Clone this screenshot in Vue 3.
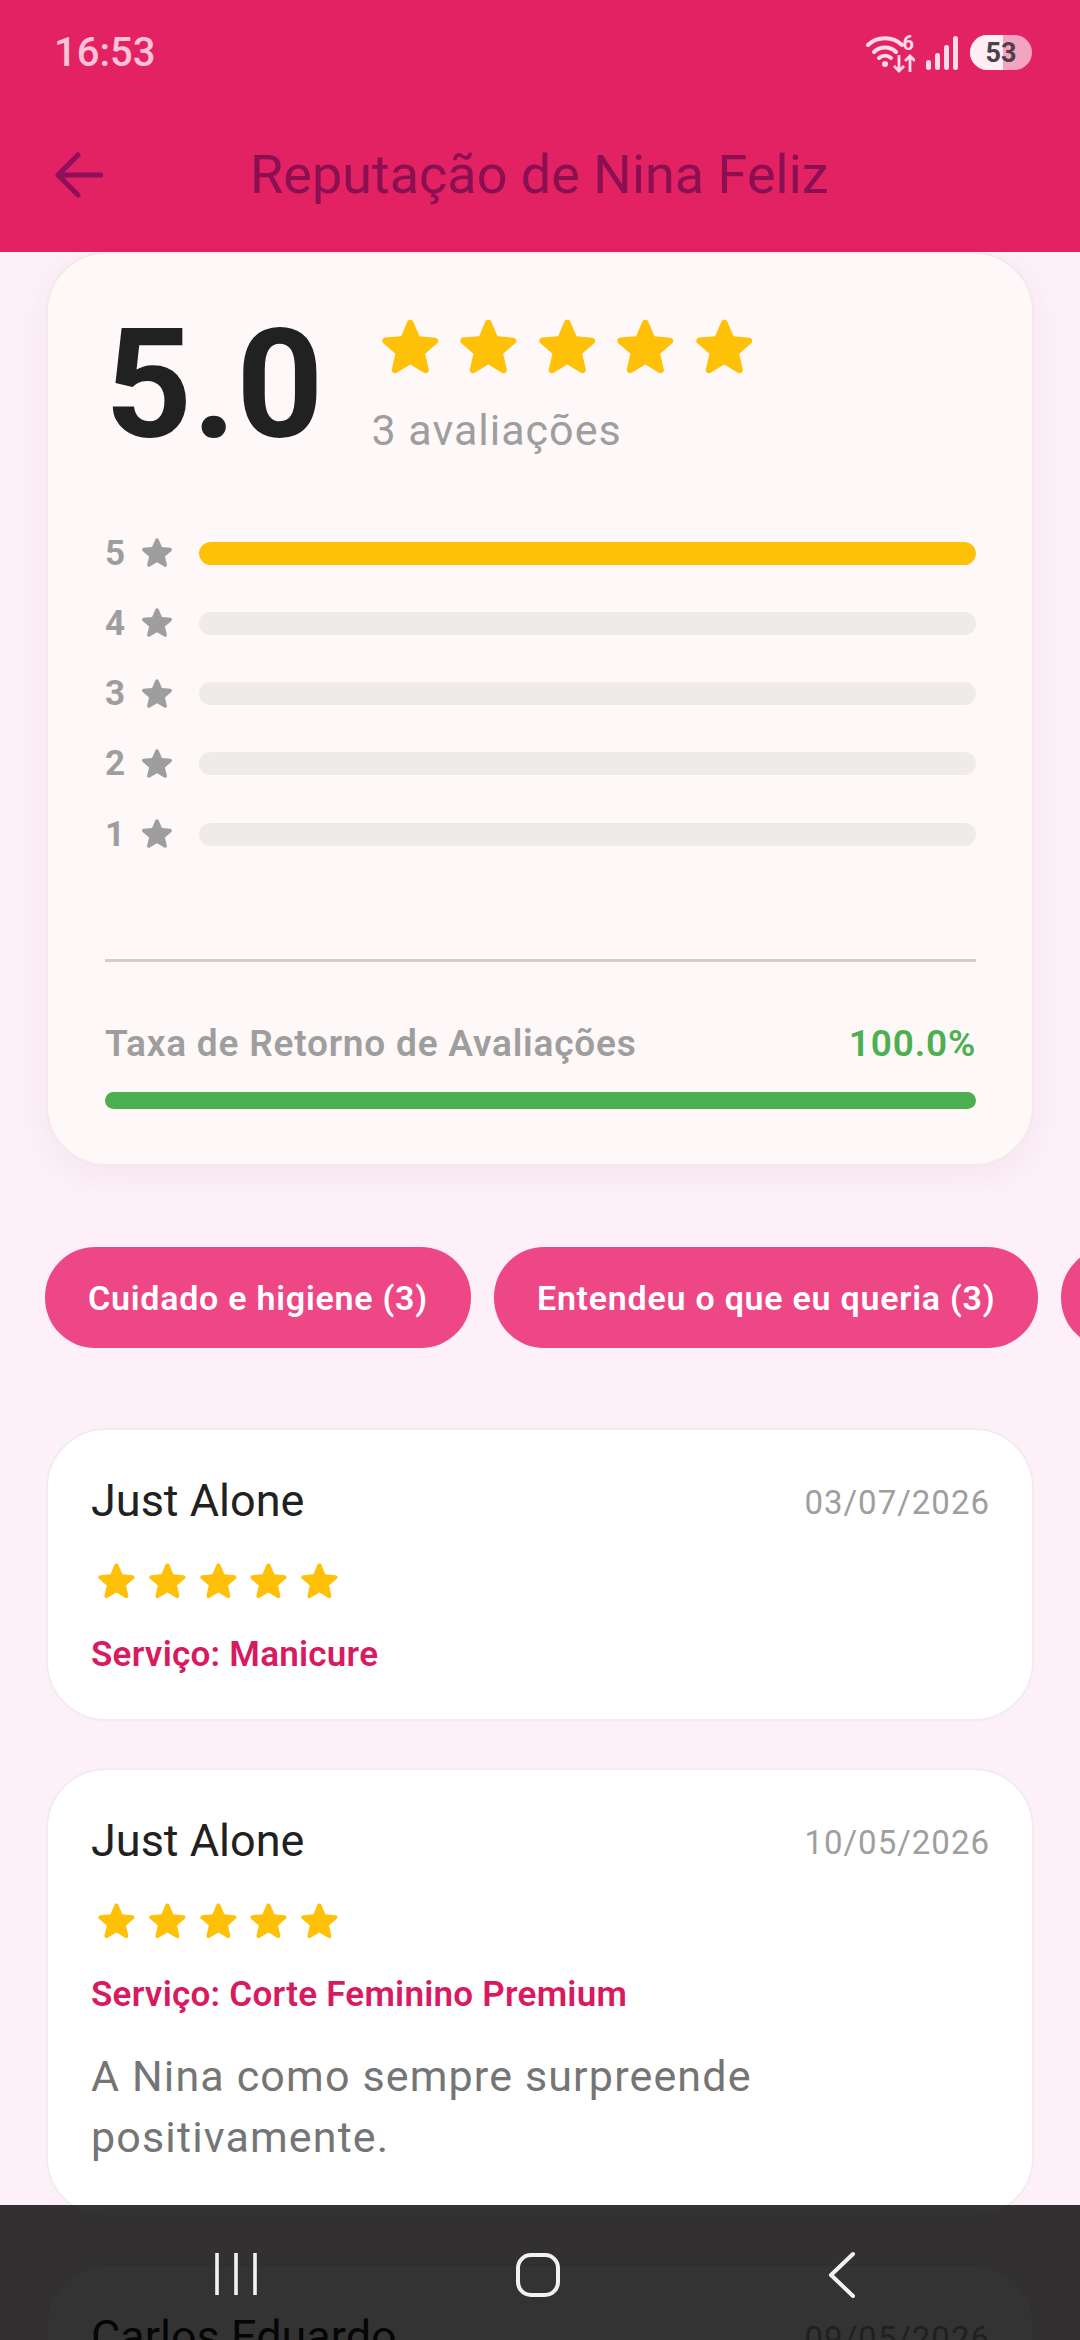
<script setup>
const starPath = 'M12 17.27l4.15 2.51c.76.46 1.69-.22 1.49-1.08l-1.1-4.72 3.67-3.18c.67-.58.31-1.68-.57-1.75l-4.83-.41-1.89-4.46c-.34-.81-1.5-.81-1.84 0L9.19 8.63l-4.83.41c-.88.07-1.24 1.17-.57 1.75l3.67 3.18-1.1 4.72c-.2.86.73 1.54 1.49 1.08l4.15-2.5z'

const bars = [
  { label: 5, pct: 100 },
  { label: 4, pct: 0 },
  { label: 3, pct: 0 },
  { label: 2, pct: 0 },
  { label: 1, pct: 0 },
]

// third chip runs off the screen, its label is never seen
const chips = ['Cuidado e higiene (3)', 'Entendeu o que eu queria (3)', '']

const reviews = [
  { name: 'Just Alone', date: '03/07/2026', service: 'Serviço: Manicure', text: '' },
  { name: 'Just Alone', date: '10/05/2026', service: 'Serviço: Corte Feminino Premium', text: 'A Nina como sempre surpreende positivamente.' },
  { name: 'Carlos Eduardo', date: '09/05/2026', service: '', text: '' },
]
</script>

<template>
  <div class="screen">
    <header class="appbar">
      <div class="status">
        <span class="time">16:53</span>
        <div class="status-icons">
          <div class="wifi">
            <svg width="38" height="32" viewBox="0 0 38 32" fill="none" stroke="#ffdbe7" stroke-width="4" stroke-linecap="round">
              <path d="M2 9C11 0 27 0 36 9" />
              <path d="M8 16C14 10 24 10 30 16" />
              <path d="M13 22C16.500 19 21.500 19 25 22" />
              <circle cx="19" cy="28" r="3" fill="#ffdbe7" stroke="none" />
            </svg>
            <span class="wifi-six">6</span>
            <svg class="wifi-arrows" width="22" height="19" viewBox="0 0 22 19" fill="none" stroke="#ffdbe7" stroke-width="2.8">
              <path d="M6 1V17M1 12L6 17L11 12" />
              <path d="M17 18V2M12 7L17 2L22 7" />
            </svg>
          </div>
          <svg width="32" height="34" viewBox="0 0 32 34" fill="#ffdbe7">
            <rect x="0" y="24" width="5" height="10" rx="2.5" />
            <rect x="9" y="17" width="5" height="17" rx="2.5" />
            <rect x="18" y="9" width="5" height="25" rx="2.5" />
            <rect x="27" y="0" width="5" height="34" rx="2.5" />
          </svg>
          <div class="battery">
            <div class="battery-fill"></div>
            <span class="battery-num">53</span>
          </div>
        </div>
      </div>
      <div class="toolbar">
        <svg class="back" width="48" height="48" viewBox="0 0 48 48" fill="none" stroke="#8f0f5c" stroke-width="5" stroke-linecap="round" stroke-linejoin="round">
          <path d="M46 24H4M23 4L3 24L23 44" />
        </svg>
        <h1 class="title">Reputação de Nina Feliz</h1>
      </div>
    </header>

    <main class="content">
      <section class="summary">
        <div class="summary-top">
          <span class="score">5.0</span>
          <div class="score-side">
            <div class="big-stars">
              <svg v-for="n in 5" :key="n" width="78.6" height="78.6" viewBox="0 0 24 24" fill="#ffc107"><path :d="starPath" /></svg>
            </div>
            <span class="count">3 avaliações</span>
          </div>
        </div>

        <div class="bars">
          <div v-for="b in bars" :key="b.label" class="bar-row">
            <span class="bar-label">{{ b.label }}</span>
            <svg width="42" height="42" viewBox="0 0 24 24" fill="#9e9e9e"><path :d="starPath" /></svg>
            <div class="track"><div class="track-fill" :style="{ width: b.pct + '%' }"></div></div>
          </div>
        </div>

        <div class="divider"></div>

        <div class="rate-row">
          <span class="rate-label">Taxa de Retorno de Avaliações</span>
          <span class="rate-value">100.0%</span>
        </div>
        <div class="rate-bar"></div>
      </section>

      <div class="chips">
        <div v-for="(c, i) in chips" :key="i" class="chip">{{ c }}</div>
      </div>

      <div class="reviews">
        <article v-for="(r, i) in reviews" :key="i" class="review">
          <div class="review-head">
            <span class="review-name">{{ r.name }}</span>
            <span class="review-date">{{ r.date }}</span>
          </div>
          <div class="small-stars">
            <svg v-for="n in 5" :key="n" width="50.8" height="50.8" viewBox="0 0 24 24" fill="#ffc107"><path :d="starPath" /></svg>
          </div>
          <p v-if="r.service" class="review-service">{{ r.service }}</p>
          <p v-if="r.text" class="review-text">{{ r.text }}</p>
        </article>
      </div>
    </main>

    <!-- system nav sits over the list -->
    <nav class="navbar">
      <svg width="44" height="46" viewBox="0 0 44 46" fill="none" stroke="#f2f2f2" stroke-width="3.6">
        <path d="M3 2V44M22 2V44M41 2V44" />
      </svg>
      <svg width="46" height="48" viewBox="0 0 46 48" fill="none" stroke="#f2f2f2" stroke-width="4">
        <rect x="3" y="4" width="40" height="40" rx="13" />
      </svg>
      <svg width="30" height="48" viewBox="0 0 30 48" fill="none" stroke="#f2f2f2" stroke-width="4" stroke-linecap="round" stroke-linejoin="round">
        <path d="M26 3L4 24L26 45" />
      </svg>
    </nav>
  </div>
</template>

<style scoped>
.screen {
  position: relative;
  width: 1080px;
  height: 2340px;
  overflow: hidden;
  background: #fdf0f9;
  font-family: Roboto, sans-serif;
}

/* top pink bar with status row inside */
.appbar {
  height: 252px;
  background: #e32264;
}

.status {
  height: 105px;
  box-sizing: border-box;
  padding: 0 48px 0 54px;
  display: flex;
  align-items: center;
  justify-content: space-between;
}

.time {
  font-size: 40px;
  font-weight: 500;
  color: #ffc3d7;
}

.status-icons {
  display: flex;
  align-items: center;
  gap: 12px;
}

.wifi {
  position: relative;
  width: 48px;
  height: 34px;
}

.wifi-six {
  position: absolute;
  right: 0;
  top: -5px;
  font-size: 20px;
  font-weight: 700;
  color: #ffdbe7;
}

.wifi-arrows {
  position: absolute;
  right: -1px;
  bottom: -3px;
}

.battery {
  position: relative;
  width: 62px;
  height: 35px;
  border-radius: 18px;
  background: #f2a4c1;
  overflow: hidden;
  display: flex;
  align-items: center;
  justify-content: center;
}

.battery-fill {
  position: absolute;
  left: 0;
  top: 0;
  bottom: 0;
  width: 53%;
  background: #ffeef4;
}

.battery-num {
  position: relative;
  font-size: 27px;
  font-weight: 700;
  color: #4a4248;
}

.toolbar {
  height: 147px;
  display: flex;
  align-items: center;
  padding-left: 55px;
  padding-bottom: 8px;
  box-sizing: border-box;
}

.title {
  margin: 0 0 0 147px;
  font-size: 54px;
  font-weight: 400;
  color: #8a1052;
}

.content {
  display: flex;
  flex-direction: column;
}

/* big reputation card */
.summary {
  margin: 0 46px;
  height: 914px;
  box-sizing: border-box;
  padding: 0 56px 0 57px;
  background: #fff8f8;
  border: 2px solid #f4e9ea;
  border-radius: 60px;
  box-shadow: 0 10px 30px rgba(120, 60, 90, 0.06);
}

.summary-top {
  display: flex;
  align-items: flex-start;
  height: 278px;
}

.score {
  margin-top: 42px;
  font-size: 152px;
  line-height: 178px;
  font-weight: 700;
  color: #212121;
}

.score-side {
  margin-left: 47px;
  display: flex;
  flex-direction: column;
}

.big-stars {
  display: flex;
  margin-top: 54px;
}

.count {
  margin-top: 18px;
  margin-left: 1px;
  font-size: 43px;
  letter-spacing: 1px;
  color: #9e9e9e;
}

.bars {
  display: flex;
  flex-direction: column;
  gap: 28.3px;
}

.bar-row {
  display: flex;
  align-items: center;
  height: 42px;
}

.bar-label {
  width: 31px;
  font-size: 35px;
  font-weight: 700;
  color: #9e9e9e;
}

.track {
  flex: 1;
  height: 23px;
  margin-left: 21px;
  border-radius: 12px;
  background: #efebeb;
  overflow: hidden;
}

.track-fill {
  height: 100%;
  border-radius: 12px;
  background: #ffc107;
}

.divider {
  height: 3px;
  margin-top: 104px;
  background: #d5cccc;
}

.rate-row {
  display: flex;
  justify-content: space-between;
  align-items: center;
  margin-top: 60px;
}

.rate-label {
  font-size: 37px;
  font-weight: 600;
  letter-spacing: 0.8px;
  color: #9e9e9e;
}

.rate-value {
  font-size: 37px;
  font-weight: 600;
  letter-spacing: 0.8px;
  color: #4caf50;
}

.rate-bar {
  height: 17px;
  margin-top: 27px;
  border-radius: 9px;
  background: #4caf50;
}

.chips {
  display: flex;
  gap: 23px;
  margin-top: 81px;
  padding-left: 45px;
}

.chip {
  flex: none;
  min-width: 60px;
  height: 101px;
  padding: 0 43px;
  display: flex;
  align-items: center;
  border-radius: 50px;
  background: #ee4786;
  color: #fff;
  font-size: 34px;
  font-weight: 600;
  letter-spacing: 0.75px;
}

.reviews {
  display: flex;
  flex-direction: column;
  gap: 47px;
  margin-top: 80px;
}

.review {
  margin: 0 46px;
  padding: 44px 42px 44px 43px;
  background: #fff;
  border: 2px solid #f3ecee;
  border-radius: 60px;
}

.review-head {
  display: flex;
  justify-content: space-between;
  align-items: center;
}

.review-name {
  font-size: 45px;
  color: #212121;
}

.review-date {
  margin-top: 4px;
  font-size: 33px;
  letter-spacing: 1px;
  color: #9e9e9e;
}

.small-stars {
  display: flex;
  margin-top: 29px;
}

.review-service {
  margin: 27px 0 0;
  font-size: 35px;
  font-weight: 600;
  letter-spacing: 0.25px;
  color: #d81b60;
}

.review-text {
  margin: 31px 0 3px;
  width: 800px;
  font-size: 43px;
  line-height: 61px;
  letter-spacing: 1.15px;
  color: #757575;
}

.navbar {
  position: absolute;
  left: 0;
  right: 0;
  bottom: 0;
  height: 135px;
  background: rgba(0, 0, 0, 0.8);
}

.navbar svg {
  position: absolute;
  top: 46px;
}

.navbar svg:nth-child(1) {
  left: 214px;
}

.navbar svg:nth-child(2) {
  left: 515px;
}

.navbar svg:nth-child(3) {
  left: 827px;
}
</style>
